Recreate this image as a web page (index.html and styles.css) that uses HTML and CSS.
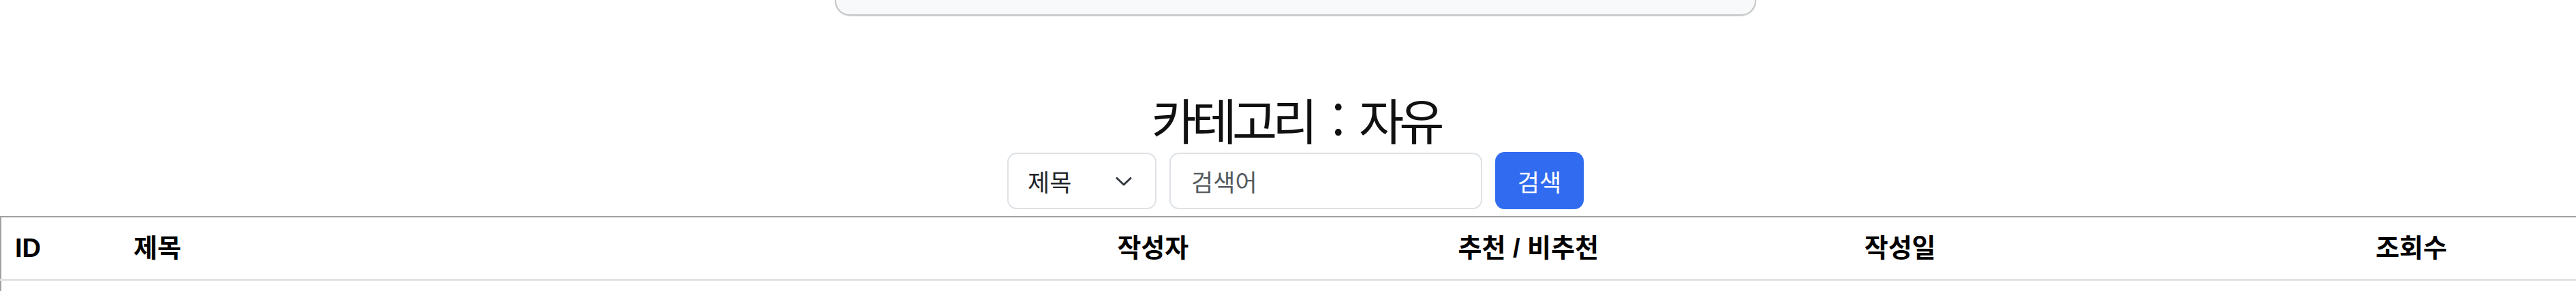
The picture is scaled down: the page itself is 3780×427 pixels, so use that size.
FILE: index.html
```html
<!DOCTYPE html>
<html lang="ko">
<head>
<meta charset="utf-8">
<title>자유 게시판</title>
<link rel="stylesheet" href="styles.css">
</head>
<body>
<div class="page">
  <div class="top-card"></div>
  <h2 class="title">카테고리 : 자유</h2>
  <form class="search">
    <div class="select">
      <span class="select-text">제목</span>
      <svg class="chev" width="24" height="13" viewBox="0 0 24 13"><polyline points="2,1.5 12,11 22,1.5" fill="none" stroke="#343a40" stroke-width="3" stroke-linecap="round" stroke-linejoin="round"/></svg>
    </div>
    <div class="input"><span class="placeholder">검색어</span></div>
    <button type="button" class="btn">검색</button>
  </form>
  <table class="board">
    <colgroup>
      <col class="c1"><col class="c2"><col class="c3"><col class="c4"><col class="c5"><col class="c6">
    </colgroup>
    <thead>
      <tr>
        <th>ID</th><th>제목</th><th>작성자</th><th>추천 / 비추천</th><th>작성일</th><th>조회수</th>
      </tr>
    </thead>
    <tbody>
      <tr><td></td><td></td><td></td><td></td><td></td><td></td></tr>
    </tbody>
  </table>
</div>
</body>
</html>
```
FILE: styles.css
```css
html, body {
  margin: 0;
  padding: 0;
  overflow: hidden;
  background: #fff;
}
.page {
  width: 3802px;
  font-family: "Liberation Sans", "Noto Sans CJK KR", sans-serif;
  color: #212529;
}
.top-card {
  width: 1348px;
  height: 21px;
  margin: 0 auto;
  box-sizing: content-box;
  background: #f8f9fa;
  border: 2px solid #c6c6c6;
  border-top: none;
  border-radius: 0 0 22px 22px;
  box-shadow: 0 1px 1px rgba(0,0,0,0.12);
}
.title {
  margin: 107px 0 0;
  text-align: center;
  font-family: "Noto Sans CJK KR", sans-serif;
  font-weight: 400;
  font-size: 72px;
  line-height: 88px;
  letter-spacing: -7px;
  word-spacing: 14px;
  color: #111;
}
.search {
  display: flex;
  justify-content: center;
  gap: 19px;
  margin: 5px 0 0;
  height: 84px;
}
.select, .input {
  box-sizing: border-box;
  height: 83px;
  margin-top: 1px;
  background: #fff;
  border: 2px solid #dee2e6;
  border-radius: 14px;
  display: flex;
  align-items: center;
  font-family: "Noto Sans CJK KR", sans-serif;
  font-size: 35px;
}
.select {
  width: 219px;
  padding: 0 34px 0 28px;
  justify-content: space-between;
  color: #212529;
}
.chev { display: block; margin-top: 2px; }
.input {
  width: 459px;
  padding: 0 30px;
}
.placeholder { color: #555b61; }
.btn {
  box-sizing: border-box;
  width: 130px;
  height: 84px;
  border: none;
  border-radius: 14px;
  background: #316cf0;
  color: #fff;
  font-family: "Noto Sans CJK KR", sans-serif;
  font-size: 35px;
  padding: 0;
}
.board {
  width: 3802px;
  margin-top: 10px;
  border-collapse: collapse;
  table-layout: fixed;
  border-top: 2px solid #a0a0a0;
  border-left: 2px solid #a0a0a0;
}
.c1 { width: 175px; }
.c2 { width: 1443px; }
.c3 { width: 500px; }
.c4 { width: 596px; }
.c5 { width: 750px; }
.c6 { width: 336px; }
.board th {
  text-align: left;
  font-weight: 700;
  font-size: 38px;
  line-height: 54px;
  padding: 18px 20px;
  border-bottom: 3px solid #dee2e6;
  color: #000;
}
.board td {
  height: 60px;
  padding: 0 20px;
}
```
